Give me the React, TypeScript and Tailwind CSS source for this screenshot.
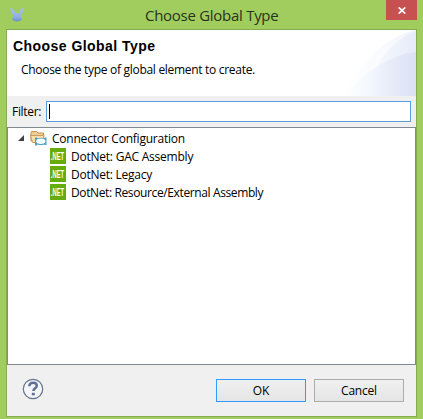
import React from "react";

const items = [
  { label: "DotNet: GAC Assembly", tracking: "tracking-[-0.23px]" },
  { label: "DotNet: Legacy", tracking: "tracking-[-0.25px]" },
  { label: "DotNet: Resource/External Assembly", tracking: "tracking-[-0.38px]" },
];

function MuleIcon() {
  return (
    <svg className="mt-[7px] block h-[15px] w-[14px]" viewBox="0 0 14 15">
      <defs>
        <linearGradient id="mule" x1="0" y1="0" x2="0" y2="1">
          <stop offset="0" stopColor="#a9c4e0" />
          <stop offset="0.65" stopColor="#91b1e3" />
          <stop offset="1" stopColor="#668fc8" />
        </linearGradient>
      </defs>
      <path d="M.4.5C2.200 1 4.700 3.500 5.500 6h3C9.300 3.500 11.800 1 13.600.5c.2 3.400-.8 5.700-2.600 7.300.1 2 .4 3.400 1 4.700-1.200 1.300-2.800 2-5 2s-3.800-.7-5-2c.6-1.300.9-2.700 1-4.700C1.200 6.200.2 3.900.4.5Z" fill="url(#mule)" />
    </svg>
  );
}

function HeaderArt() {
  return (
    <svg className="block h-[66px] w-[76px]" viewBox="0 0 76 66">
      <defs>
        <linearGradient id="outer" gradientUnits="userSpaceOnUse" x1="4" y1="0" x2="76" y2="0">
          <stop offset="0" stopColor="#fff" />
          <stop offset="0.5" stopColor="#fafbfe" />
          <stop offset="1" stopColor="#f0f4fb" />
        </linearGradient>
        <linearGradient id="inner" gradientUnits="userSpaceOnUse" x1="26" y1="0" x2="76" y2="0">
          <stop offset="0" stopColor="#fafcff" />
          <stop offset="1" stopColor="#e5ebf8" />
        </linearGradient>
        <linearGradient id="lower" gradientUnits="userSpaceOnUse" x1="4" y1="0" x2="76" y2="0">
          <stop offset="0" stopColor="#fff" />
          <stop offset="0.32" stopColor="#f5f8fe" />
          <stop offset="0.7" stopColor="#e5eaf8" />
          <stop offset="1" stopColor="#dce2f5" />
        </linearGradient>
      </defs>
      <path d="M4 66C18 33 46 6 76 0v66Z" fill="url(#outer)" />
      <path d="M26 66C31 36 52 10 76 1v65Z" fill="url(#inner)" />
      <path d="M4 66C24 42 50 25 76 21.700V66Z" fill="url(#lower)" />
    </svg>
  );
}

function FolderIcon() {
  return (
    <svg className="block h-4 w-[17px] shrink-0" viewBox="0 0 17 16">
      <path d="M1 11V2.500Q1 1.500 2 1.500h4.500L8 3h5.500v7.500Z" fill="#f0cf97" stroke="#c58f4c" />
      <path d="M.6 5.500H14l-1.500 7H2.500Z" fill="#fbdfaa" stroke="#d09a58" />
      <path d="M5 7.500h1.500l1 .8c2-.9 4.500-.9 6.500 0l1-.8h1.500V15H15l-1-.6c-2 .9-4.500.9-6.500 0l-1 1.100H5Z" fill="#4fa0c4" />
      <ellipse cx="10.800" cy="11.200" rx="4.600" ry="2.700" fill="#f6fdff" />
    </svg>
  );
}

function NetIcon() {
  return (
    <svg className="block h-4 w-4 shrink-0 overflow-visible bg-[#65ac0c]" viewBox="0 0 16 16">
      <text x="1.500" y="12" transform="scale(.58 1)" className="fill-white font-['Liberation_Sans'] text-[10px] font-bold leading-none">.NET</text>
    </svg>
  );
}

function HelpIcon() {
  return (
    <svg className="block h-[22px] w-[22px]" viewBox="0 0 22 22">
      <circle cx="11" cy="11" r="9.700" fill="#f4f5f7" stroke="#63738f" strokeWidth="1.200" />
      <path d="M7.300 8.300c.1-2.400 1.600-3.600 3.800-3.600s3.700 1.200 3.700 3c0 2.500-3.400 2.700-3.400 5.200" fill="none" stroke="#5d7196" strokeWidth="2.500" />
      <path d="M9.800 14.800h3v2.500h-3Z" fill="#5d7196" />
    </svg>
  );
}

export default function App() {
  return (
    <div className="flex h-[419px] w-[423px] flex-col overflow-hidden bg-[#a1cd5f] font-['Open_Sans','Noto_Sans',sans-serif] text-[12px] leading-[18px] text-black">
      <div className="flex h-[29px] shrink-0 items-start pl-[10px]">
        <MuleIcon />
        <h1 className="ml-[121px] mt-[3px] flex-1 whitespace-nowrap text-[15px] leading-[24px] tracking-[-0.28px] text-[#29331b]">Choose Global Type</h1>
        <button aria-label="Close" className="mr-[6px] flex h-5 w-[31px] items-center justify-center bg-[#c75050]">
          <svg className="mt-[1px] h-[7px] w-2" viewBox="0 0 8 7">
            <path d="M.7.4 7.300 6.600M7.300.4.7 6.600" stroke="#fff" strokeWidth="1.700" />
          </svg>
        </button>
      </div>
      <div className="ml-[6px] flex h-[388px] w-[411px] shrink-0 flex-col border border-[#86ab50] bg-[#f0f0f0]">
        <header className="flex h-[66px] shrink-0 justify-between bg-white">
          <div className="whitespace-nowrap pl-[6px] pt-[7px]">
            <h2 className="font-['Liberation_Sans'] text-[14px] font-bold leading-[18px] tracking-[0.45px]">Choose Global Type</h2>
            <p className="pl-[8px] pt-[6px] tracking-[-0.3px]">Choose the type of global element to create.</p>
          </div>
          <HeaderArt />
        </header>
        <div className="flex h-[31px] shrink-0 items-start pl-[5px] pr-[5px] pt-[5px]">
          <label className="w-[34px] whitespace-nowrap pt-[2px] tracking-[-0.3px]">Filter:</label>
          <div className="flex h-[21px] flex-1 items-center border border-[#569de5] bg-white pl-[2px]">
            <span className="h-[15px] w-px bg-black" />
          </div>
        </div>
        <main className="h-[238px] shrink-0 border border-[#828790] bg-white pt-[1px]">
          <div className="flex h-[18px] items-center pl-[10px]">
            <svg className="mr-[6px] h-[6px] w-[6px]" viewBox="0 0 6 6"><path d="M6 0v6H0Z" fill="#404040" /></svg>
            <FolderIcon />
            <span className="ml-[5px] whitespace-nowrap pt-[2px] tracking-[-0.22px]">Connector Configuration</span>
          </div>
          {items.map((item) => (
            <div key={item.label} className="flex h-[18px] items-center pl-[42px]">
              <NetIcon />
              <span className={"ml-[5px] whitespace-nowrap pt-[2px] " + item.tracking}>{item.label}</span>
            </div>
          ))}
        </main>
        <footer className="flex flex-1 items-start pl-[15px] pr-[12px] pt-[13px]">
          <HelpIcon />
          <div className="ml-auto flex gap-2 pt-[1px]">
            <button className="h-[23px] w-[90px] border border-[#3399ff] bg-linear-to-b from-[#f0f0f0] to-[#e5e5e5] leading-[20px]">OK</button>
            <button className="h-[23px] w-[90px] border border-[#acacac] bg-linear-to-b from-[#f0f0f0] to-[#e5e5e5] leading-[20px] tracking-[-0.2px]">Cancel</button>
          </div>
        </footer>
      </div>
    </div>
  );
}
